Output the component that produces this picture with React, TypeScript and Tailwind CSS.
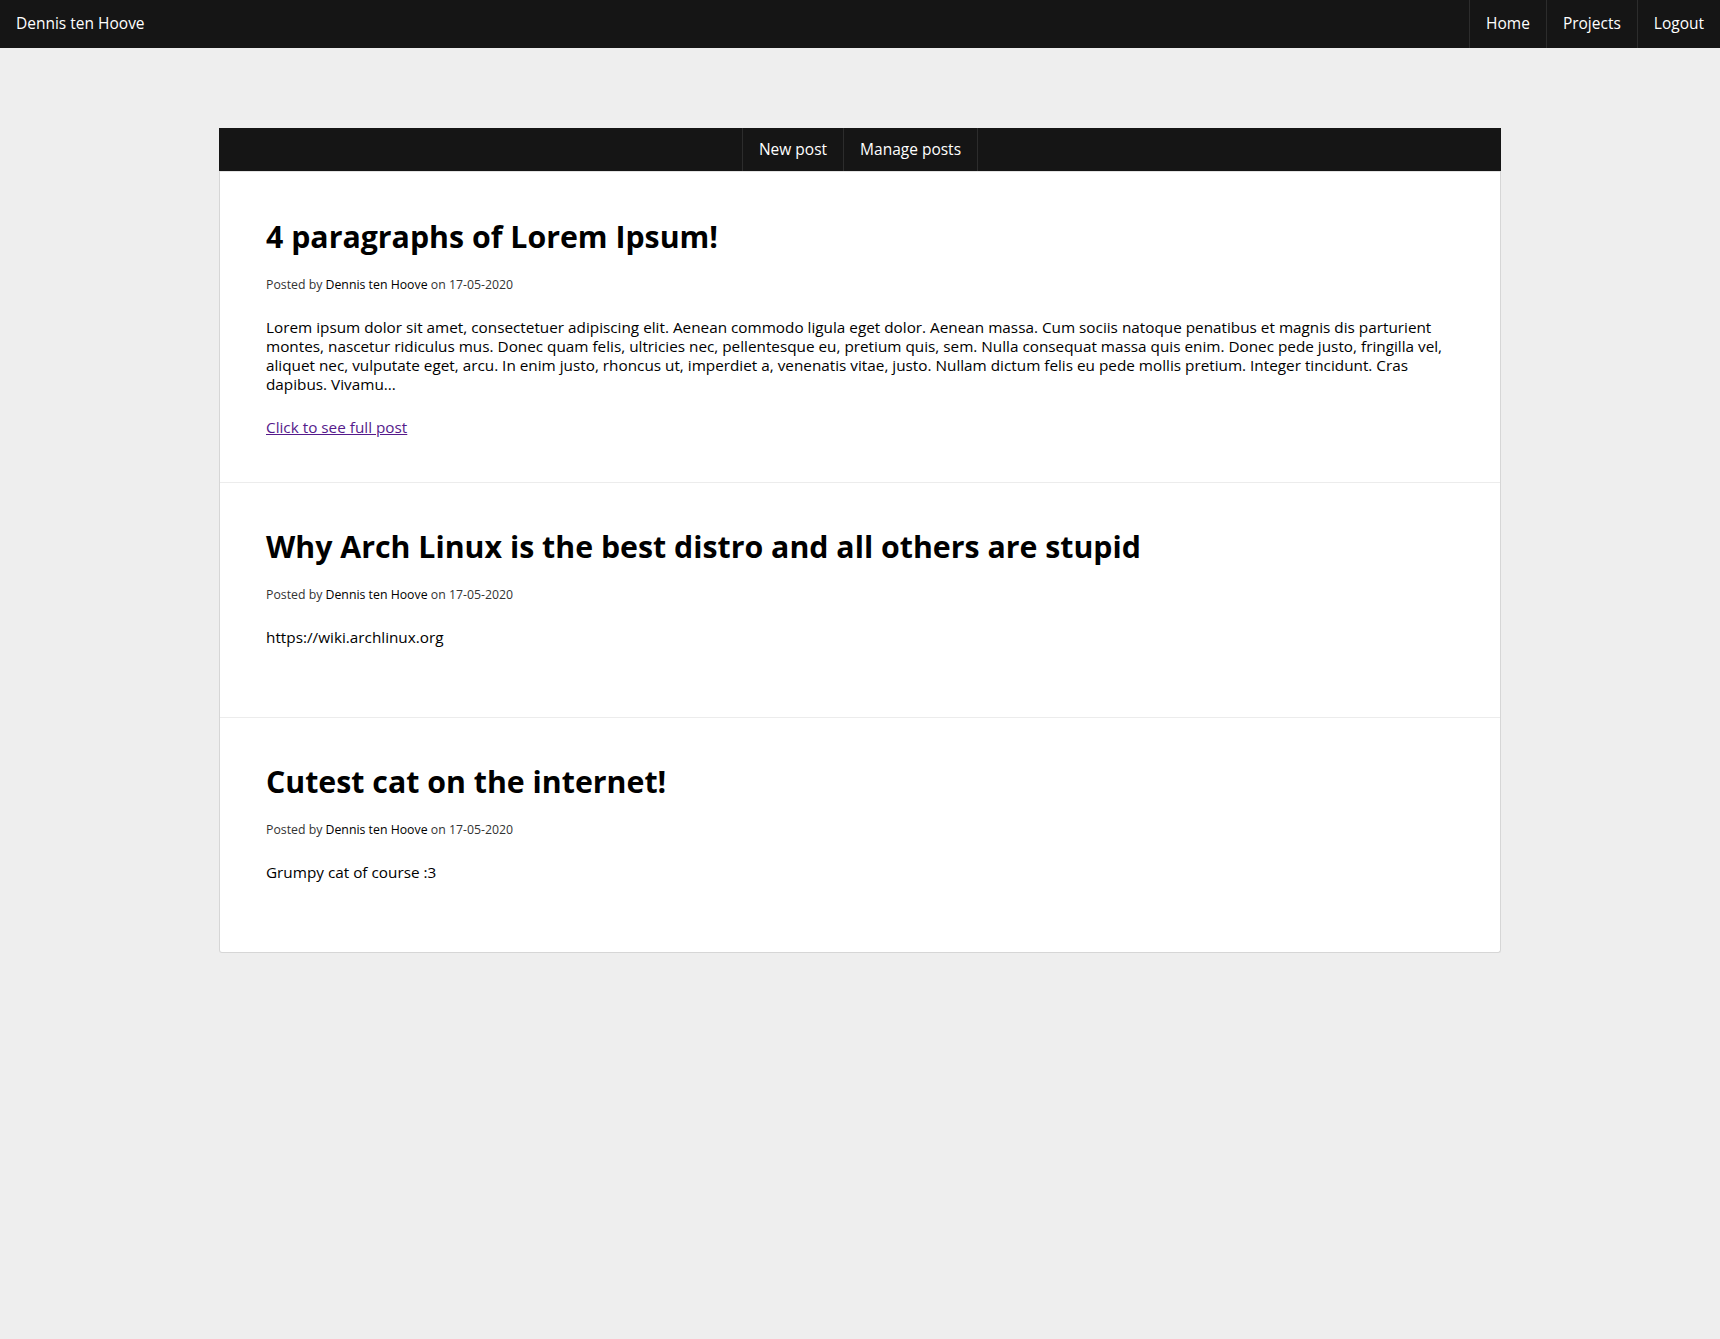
import React from 'react';

const font = { fontFamily: '"Open Sans", "Liberation Sans", sans-serif' };

interface Post {
  title: string;
  author: string;
  date: string;
  body: string;
  link?: boolean;
}

const posts: Post[] = [
  {
    title: '4 paragraphs of Lorem Ipsum!',
    author: 'Dennis ten Hoove',
    date: '17-05-2020',
    body: 'Lorem ipsum dolor sit amet, consectetuer adipiscing elit. Aenean commodo ligula eget dolor. Aenean massa. Cum sociis natoque penatibus et magnis dis parturient montes, nascetur ridiculus mus. Donec quam felis, ultricies nec, pellentesque eu, pretium quis, sem. Nulla consequat massa quis enim. Donec pede justo, fringilla vel, aliquet nec, vulputate eget, arcu. In enim justo, rhoncus ut, imperdiet a, venenatis vitae, justo. Nullam dictum felis eu pede mollis pretium. Integer tincidunt. Cras dapibus. Vivamu...',
    link: true
  },
  {
    title: 'Why Arch Linux is the best distro and all others are stupid',
    author: 'Dennis ten Hoove',
    date: '17-05-2020',
    body: 'https://wiki.archlinux.org'
  },
  {
    title: 'Cutest cat on the internet!',
    author: 'Dennis ten Hoove',
    date: '17-05-2020',
    body: 'Grumpy cat of course :3'
  }
];

const PostItem: React.FC<{ post: Post; last: boolean }> = ({ post, last }) => {
  return <article className={`px-[46px] pt-[45px] ${post.link ? 'pb-[45px]' : 'pb-[70px]'} ${last ? '' : 'border-b border-[#ececec]'}`}>
      <h2 className="text-[30.3px] leading-[38px] font-bold text-black">{post.title}</h2>
      <p className="mt-[21px] text-[12.3px] leading-[16px] text-[#333]">
        Posted by <span className="text-black">{post.author}</span> on {post.date}
      </p>
      <p className="mt-[25px] text-[15.3px] leading-[19px] text-black">{post.body}</p>
      {post.link && <p className="mt-[24px] text-[15.3px] leading-[19px]">
          <a href="#" className="text-[#551a8b] underline">Click to see full post</a>
        </p>}
    </article>;
};

export default function App() {
  return <div className="min-h-[1339px] bg-[#eeeeee]" style={font}>
      <header className="h-[48px] bg-[#151515] flex justify-between items-stretch text-white text-[15.5px]">
        <div className="flex items-center pl-[16px]">Dennis ten Hoove</div>
        <nav className="flex">
          {['Home', 'Projects', 'Logout'].map(item => <a key={item} href="#" className="flex items-center px-[16px] border-l border-[#2c2c2c]">
              {item}
            </a>)}
        </nav>
      </header>

      <main className="w-[1282px] mx-auto mt-[80px]">
        <div className="h-[43px] bg-[#151515] flex justify-center text-white text-[15.5px]">
          <a href="#" className="flex items-center px-[16px] border-l border-[#2c2c2c]">New post</a>
          <a href="#" className="flex items-center px-[16px] border-l border-r border-[#2c2c2c]">Manage posts</a>
        </div>
        <div className="bg-white border border-t-0 border-[#d6d6d6] rounded-b-[3px]">
          <div className="h-[2px] border-t border-[#e2e2e2]" />
          {posts.map((post, i) => <PostItem key={post.title} post={post} last={i === posts.length - 1} />)}
        </div>
      </main>
    </div>;
}
